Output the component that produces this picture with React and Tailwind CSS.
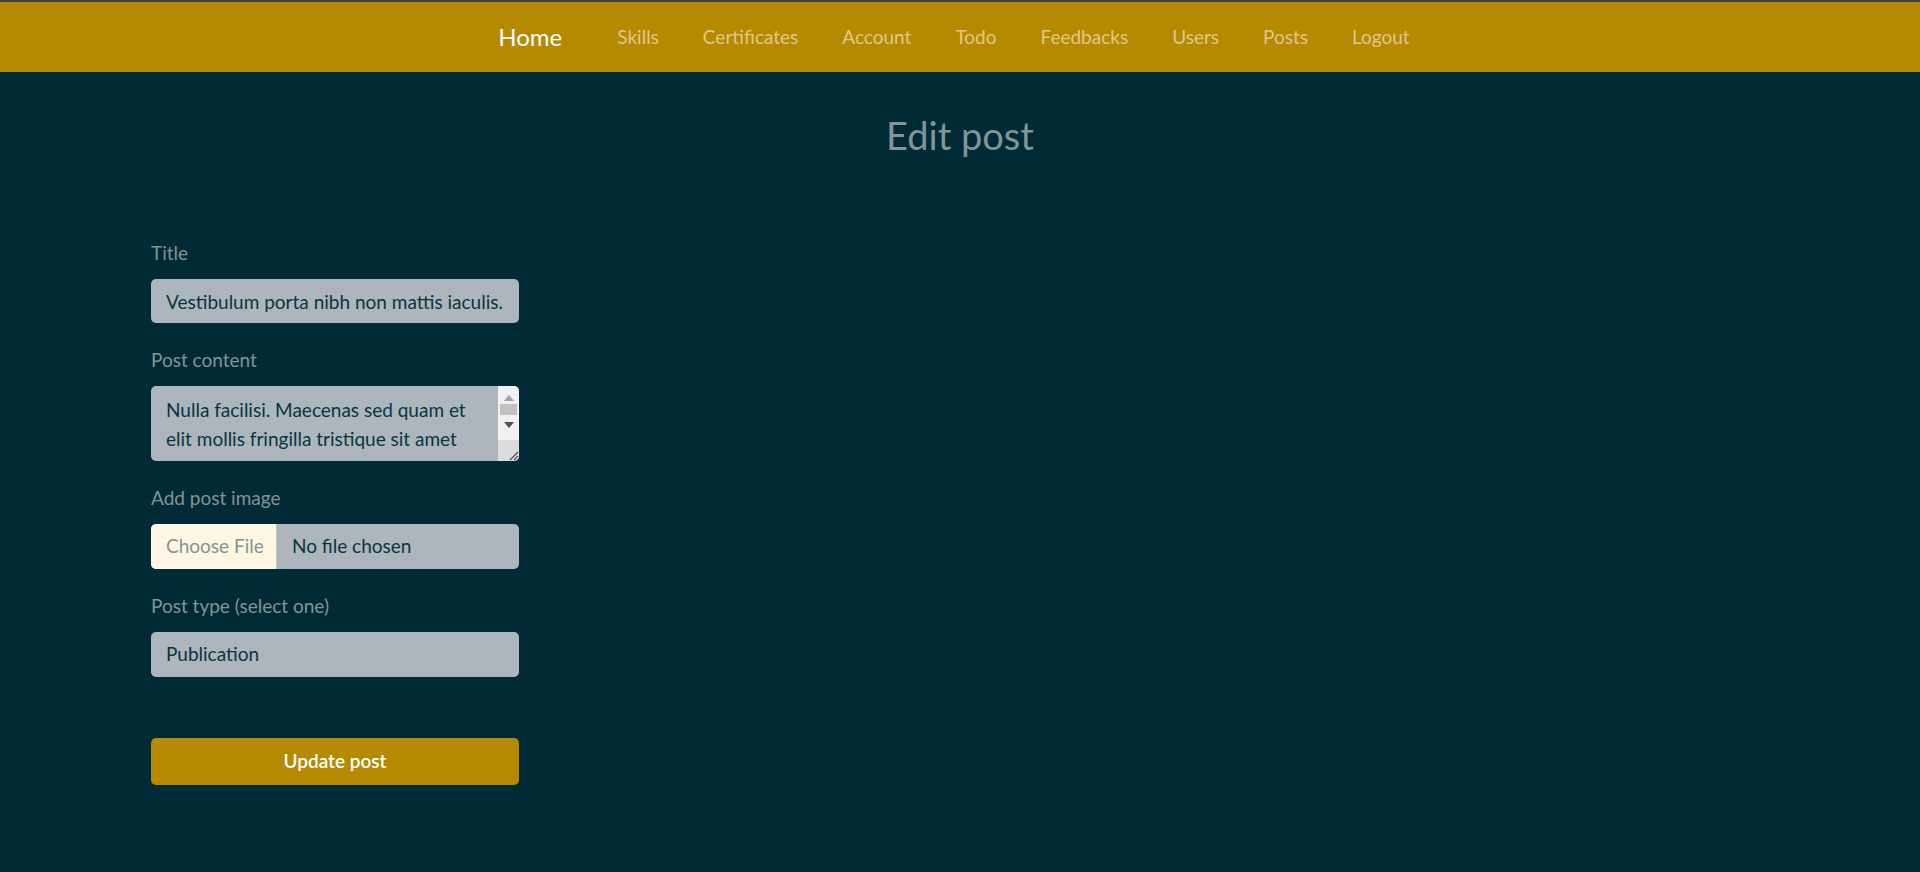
import React, { useState } from 'react';

const links = ['Skills', 'Certificates', 'Account', 'Todo', 'Feedbacks', 'Users', 'Posts', 'Logout'];

const content =
  'Nulla facilisi. Maecenas sed quam et elit mollis fringilla tristique sit amet lorem. Donec a lacus vitae nisl malesuada porta. Integer vel sapien quis augue faucibus feugiat.';

const App = () => {
  const [title, setTitle] = useState('Vestibulum porta nibh non mattis iaculis.');
  const [body, setBody] = useState(content);
  const [type, setType] = useState('Publication');

  return (
    <div className="min-h-screen bg-[#002b36] font-['Lato','Noto_Sans',sans-serif]">
      {/* Navbar */}
      <nav className="h-[72px] border-t-2 border-[#3f3f3f] bg-[#b58900] flex items-center justify-center">
        <div className="flex items-center pr-[12px]">
          <a href="#" className="text-white text-[24px] mr-[55px]">Home</a>
          <ul className="flex items-center gap-[44px]">
            {links.map((l) => (
              <li key={l}>
                <a href="#" className="text-[#dec98c] text-[19px]">{l}</a>
              </li>
            ))}
          </ul>
        </div>
      </nav>

      <h1 className="text-center text-[#839496] text-[38px] mt-[39px] leading-[48px]">Edit post</h1>

      <form className="pl-[151px] mt-[82px] w-[519px] flex flex-col" onSubmit={(e) => e.preventDefault()}>
        <label className="text-[#839496] text-[19px] leading-[24px] mb-[14px]">Title</label>
        <input
          className="h-[44px] rounded-[5px] bg-[#adb5bd] text-[#073642] text-[19px] px-[15px] outline-none"
          value={title}
          onChange={(e) => setTitle(e.target.value)}
        />

        <label className="text-[#839496] text-[19px] leading-[24px] mt-[25px] mb-[14px]">Post content</label>
        <div className="h-[75px] rounded-[5px] bg-[#adb5bd] flex overflow-hidden">
          <textarea
            className="flex-1 resize-none overflow-hidden bg-transparent text-[#073642] text-[19px] leading-[29px] pl-[15px] pr-[6px] pt-[9px] outline-none"
            value={body}
            onChange={(e) => setBody(e.target.value)}
          />
          {/* scrollbar + resizer */}
          <div className="w-[21px] flex flex-col">
            <div className="flex-1 bg-[#f1f1f1] flex flex-col items-center pt-[9px]">
              <svg width="10" height="6" viewBox="0 0 10 6"><path d="M5 0L10 6H0z" fill="#a3a3a3" /></svg>
              <div className="w-[17px] h-[11px] bg-[#c1c1c1] mt-[3px]" />
              <svg className="mt-[7px]" width="10" height="6" viewBox="0 0 10 6"><path d="M0 0H10L5 6z" fill="#505050" /></svg>
            </div>
            <div className="h-[21px] bg-[#dcdcdc] flex items-end justify-end">
              <svg width="12" height="12" viewBox="0 0 12 12">
                <path d="M11 3L3 11M11 7L7 11" stroke="#505050" strokeWidth="1.2" />
              </svg>
            </div>
          </div>
        </div>

        <label className="text-[#839496] text-[19px] leading-[24px] mt-[25px] mb-[14px]">Add post image</label>
        <div className="h-[45px] rounded-[5px] bg-[#adb5bd] flex items-stretch overflow-hidden text-[19px]">
          <span className="w-[126px] bg-[#fdf6e3] text-[#839496] flex items-center pl-[15px] border-r border-[#c9c2ad]">Choose File</span>
          <span className="text-[#073642] flex items-center pl-[15px]">No file chosen</span>
        </div>

        <label className="text-[#839496] text-[19px] leading-[24px] mt-[25px] mb-[14px]">Post type (select one)</label>
        <select
          className="h-[45px] rounded-[5px] bg-[#adb5bd] text-[#073642] text-[19px] px-[15px] appearance-none outline-none"
          value={type}
          onChange={(e) => setType(e.target.value)}
        >
          <option>Publication</option>
          <option>Article</option>
          <option>News</option>
        </select>

        <button
          type="submit"
          className="mt-[61px] h-[47px] rounded-[5px] bg-[#b58900] text-white text-[19px] font-semibold"
        >
          Update post
        </button>
      </form>
    </div>
  );
};

export default App;
